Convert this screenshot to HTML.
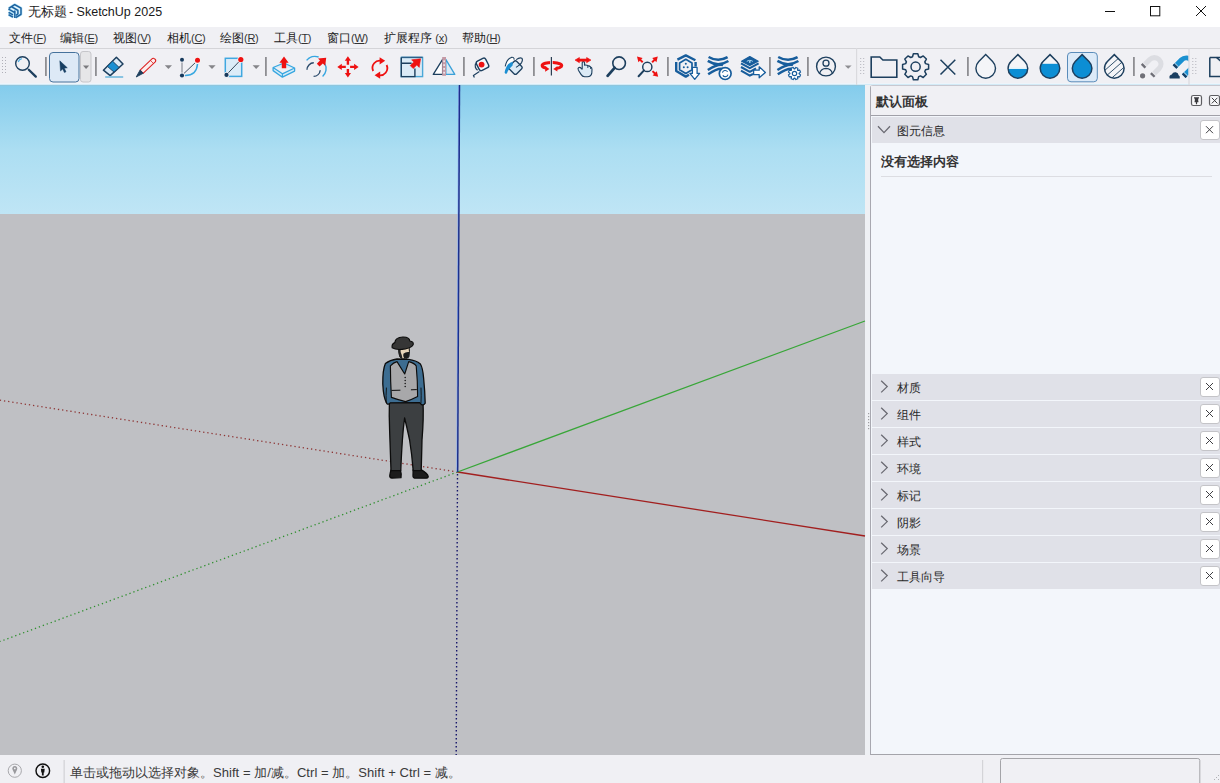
<!DOCTYPE html>
<html><head><meta charset="utf-8">
<style>
*{margin:0;padding:0;box-sizing:border-box}
html,body{width:1220px;height:783px;overflow:hidden;background:#f0f0f4;font-family:"Liberation Sans",sans-serif;color:#1a1a1a;position:relative}
.a{position:absolute}
.ov{position:absolute;left:0;top:0;z-index:10}
#title{left:0;top:0;width:1220px;height:27px;background:#ffffff}
#title .t{left:28px;top:3.5px;font-size:12.5px;color:#1a1a1a;white-space:nowrap;letter-spacing:0}
#menu{left:0;top:27px;width:1220px;height:22px;background:#f0f0f4;border-bottom:1px solid #d4d4d8}
#menu>span{position:absolute;top:2.5px;font-size:12px;white-space:nowrap;color:#1a1a1a}
#menu i{font-style:normal;font-size:11px;letter-spacing:-0.3px;color:#333}
#menu u{text-decoration:underline;text-underline-offset:1px}
#tb{left:0;top:49px;width:1220px;height:36px;background:#f0f0f4;border-bottom:1px solid #d2eaf6;box-shadow:inset 0 -1px 0 #eef4fa}
#vp{left:0;top:85px;width:865px;height:670px;background:#bfc0c4;overflow:hidden}
#sky{left:0;top:0;width:865px;height:129px;background:linear-gradient(#84ccec 0%,#acdef2 50%,#bfe5f5 100%);border-top:1px solid #8ec6de}
#gap{left:865px;top:85px;width:6px;height:670px;background:#eef0f4}
#panel{left:870px;top:85px;width:350px;height:670px;background:#f3f6fb;border-left:1px solid #a8a8b0;border-top:1px solid #c8c8d0;border-bottom:1px solid #a4a4aa;border-top-left-radius:3px}
#ph{left:0;top:0;width:349px;height:30px;background:#f0f0f4;border-bottom:1px solid #a0a0a8}
.bold{font-weight:bold}
.c{display:inline-block;white-space:nowrap}
.sec{position:absolute;left:1px;width:348px;height:26px;background:#e0e1e8}
.sec .lbl{position:absolute;left:25px;top:6px;font-size:12px;color:#2a2a2a;white-space:nowrap}
.sec .cb{position:absolute;left:328px;top:3px;width:20px;height:20px;background:#fff;border:1px solid #c4c4c8;border-radius:3px}
#status{left:0;top:755px;width:1220px;height:28px;background:#f0f0f4}
</style></head><body>
<div id="title" class="a">
  <div class="t a"><span class="c" style="width:37.5px">无标题</span> - SketchUp 2025</div>
</div>
<div id="menu" class="a">
  <span style="left:9px"><span class="c" style="width:24px">文件</span><i>(<u>F</u>)</i></span>
  <span style="left:60px"><span class="c" style="width:24px">编辑</span><i>(<u>E</u>)</i></span>
  <span style="left:113px"><span class="c" style="width:24px">视图</span><i>(<u>V</u>)</i></span>
  <span style="left:167px"><span class="c" style="width:24px">相机</span><i>(<u>C</u>)</i></span>
  <span style="left:220px"><span class="c" style="width:24px">绘图</span><i>(<u>R</u>)</i></span>
  <span style="left:274px"><span class="c" style="width:24px">工具</span><i>(<u>T</u>)</i></span>
  <span style="left:327px"><span class="c" style="width:24px">窗口</span><i>(<u>W</u>)</i></span>
  <span style="left:384px"><span class="c" style="width:48px">扩展程序</span> <i>(<u>x</u>)</i></span>
  <span style="left:462px"><span class="c" style="width:24px">帮助</span><i>(<u>H</u>)</i></span>
</div>
<div id="tb" class="a"></div>
<div id="vp" class="a">
  <div id="sky" class="a"></div>
</div>
<div id="gap" class="a"></div>
<div id="panel" class="a">
  <div id="ph" class="a"><div class="a bold" style="left:5px;top:8px;font-size:12.5px;color:#333">默认面板</div></div>
  <div class="sec" style="top:31px"><div class="lbl">图元信息</div><div class="cb" style="top:2.5px"></div></div>
  <div class="a bold" style="left:10px;top:68px;font-size:12.5px;color:#333">没有选择内容</div>
  <div class="a" style="left:10px;top:89.5px;width:331px;height:1.8px;background:#dcdde2"></div>
  <div class="sec" style="top:288px"><div class="lbl">材质</div><div class="cb"></div></div>
  <div class="sec" style="top:315px"><div class="lbl">组件</div><div class="cb"></div></div>
  <div class="sec" style="top:342px"><div class="lbl">样式</div><div class="cb"></div></div>
  <div class="sec" style="top:369px"><div class="lbl">环境</div><div class="cb"></div></div>
  <div class="sec" style="top:396px"><div class="lbl">标记</div><div class="cb"></div></div>
  <div class="sec" style="top:423px"><div class="lbl">阴影</div><div class="cb"></div></div>
  <div class="sec" style="top:450px"><div class="lbl">场景</div><div class="cb"></div></div>
  <div class="sec" style="top:477px"><div class="lbl">工具向导</div><div class="cb"></div></div>
</div>
<div id="status" class="a">
  <div class="a" style="left:70px;top:9px;font-size:13px;color:#3a3a3a;white-space:nowrap;letter-spacing:0.05px"><span class="c" style="width:143px">单击或拖动以选择对象。</span>Shift = <span class="c" style="width:13px">加</span>/<span class="c" style="width:26px">减。</span>Ctrl = <span class="c" style="width:26px">加。</span>Shift + Ctrl = <span class="c" style="width:26px">减。</span></div>
</div>
<svg class="ov" width="1220" height="783" viewBox="0 0 1220 783">
<!-- toolbar icons -->
<g id="tbicons">
<!-- grip -->
<g fill="#b0b0b8">
<rect x="2" y="57" width="1" height="1"/><rect x="5" y="57" width="1" height="1"/>
<rect x="2" y="60" width="1" height="1"/><rect x="5" y="60" width="1" height="1"/>
<rect x="2" y="63" width="1" height="1"/><rect x="5" y="63" width="1" height="1"/>
<rect x="2" y="66" width="1" height="1"/><rect x="5" y="66" width="1" height="1"/>
<rect x="2" y="69" width="1" height="1"/><rect x="5" y="69" width="1" height="1"/>
<rect x="2" y="72" width="1" height="1"/><rect x="5" y="72" width="1" height="1"/>
</g>
<!-- separators -->
<g fill="#8e8e92">
<rect x="45" y="57" width="1.8" height="19"/>
<rect x="95" y="57" width="1.8" height="19"/>
<rect x="265" y="57" width="1.8" height="19"/>
<rect x="463" y="57" width="1.8" height="19"/>
<rect x="533" y="57" width="1.8" height="19"/>
<rect x="667" y="57" width="1.8" height="19"/>
<rect x="769" y="57" width="1.8" height="19"/>
<rect x="807" y="57" width="1.8" height="19"/>
<rect x="967" y="57" width="1.8" height="19"/>
<rect x="1133" y="57" width="1.8" height="19"/>
</g>
<!-- magnifier -->
<circle cx="22.5" cy="63.5" r="6.8" fill="none" stroke="#1d3f5e" stroke-width="1.4"/>
<path d="M18.2,62 A4.6,4.6 0 0 1 21.8,58.7" fill="none" stroke="#4aaee4" stroke-width="1.2"/>
<line x1="28.8" y1="69.8" x2="35.8" y2="76.6" stroke="#1d3f5e" stroke-width="2.3" stroke-linecap="round"/>
<!-- select button -->
<rect x="49.5" y="52.5" width="29.5" height="29.5" rx="3.5" fill="#dde9f6" stroke="#46729c" stroke-width="1"/>
<path d="M59.8,60.8 L67.3,67.8 L64.3,68.2 L66,71.8 L64.4,72.6 L62.7,69 L60.5,71 Z" fill="#173e62" stroke="#173e62" stroke-width="0.5" stroke-linejoin="round"/>
<rect x="80.5" y="51.5" width="10.5" height="30.5" rx="2.5" fill="#e6e6e8" stroke="#c6c6ca" stroke-width="1"/>
<path d="M83,65.6 L89.2,65.6 L86.1,69 Z" fill="#7a7a7e"/>
<!-- eraser -->
<path d="M103.4,70.2 L116.4,57.2 L123,64.0 L110.2,75.6 Z" fill="#dbeaf7" stroke="#1d3f5e" stroke-width="1.5" stroke-linejoin="round"/>
<path d="M107.30,66.30 L112.50,61.10 L119.16,67.48 L114.04,72.12 Z" fill="#1a8fd2" stroke="#1d3f5e" stroke-width="0.9" stroke-linejoin="round"/>
<line x1="105.2" y1="77" x2="123.2" y2="77" stroke="#7dbfe0" stroke-width="1.8"/>
<!-- pencil -->
<path d="M143.1,73.3 L155.5,61.6 Q156.4,59.4 154,58.4 Q153.2,58 152.5,58.4 L140.1,70.1 Z" fill="#fbeeee" stroke="#dd2424" stroke-width="1.1" stroke-linejoin="round"/>
<path d="M150.4,60.4 L153.6,63.6" stroke="#dd2424" stroke-width="0.8"/>
<path d="M136.2,77 L140.1,70.1 L143.1,73.3 Z" fill="#1d3f5e" stroke="#1d3f5e" stroke-width="0.9" stroke-linejoin="round"/>
<path d="M164.8,65.2 L172,65.2 L168.4,68.9 Z" fill="#858589"/>
<!-- arc -->
<line x1="182" y1="61" x2="182" y2="74" stroke="#8a8e96" stroke-width="1.2"/>
<line x1="183.4" y1="74" x2="196" y2="62" stroke="#2e3e4e" stroke-width="0.9"/>
<path d="M185,75.5 Q196.6,75.6 197.5,64" fill="none" stroke="#38a8e0" stroke-width="1.5"/>
<circle cx="182" cy="59.7" r="2.9" fill="#f0f0f4"/><circle cx="182" cy="59.7" r="2" fill="#173a5c"/>
<circle cx="182" cy="75.5" r="2.9" fill="#f0f0f4"/><circle cx="182" cy="75.5" r="2.1" fill="#173a5c"/>
<circle cx="197.5" cy="60.3" r="3.3" fill="#f8f0f0"/><circle cx="197.5" cy="60.3" r="2.5" fill="#ee1111"/>
<path d="M208.4,65.2 L215.6,65.2 L212,68.9 Z" fill="#858589"/>
<!-- rectangle -->
<rect x="225.3" y="58.3" width="16.4" height="18.1" fill="#dcecf8" stroke="#40a8e0" stroke-width="1.5"/>
<line x1="227" y1="74.2" x2="240" y2="60.6" stroke="#26384a" stroke-width="0.9"/>
<circle cx="226.5" cy="74.9" r="2.9" fill="#f0f0f4"/><circle cx="226.5" cy="74.9" r="2.1" fill="#173a5c"/>
<circle cx="240.8" cy="59.5" r="3.3" fill="#f8f0f0"/><circle cx="240.8" cy="59.5" r="2.6" fill="#ee1111"/>
<path d="M252.6,65.2 L259.8,65.2 L256.2,68.9 Z" fill="#858589"/>
</g>

<g id="tb2">
<!-- push/pull -->
<path d="M273.1,67.5 L284,63 L294.6,68 L282.4,73.8 Z M273.1,67.5 L273.1,70.6 L282.4,77.2 L294.6,71.1 L294.6,68 M282.4,73.8 L282.4,77.2" fill="#d6ecf8" stroke="#36a6e0" stroke-width="1.3" stroke-linejoin="round"/>
<path d="M284,56.6 L288.6,62.8 L286.2,62.8 L286.2,68.2 L281.8,68.2 L281.8,62.8 L279.4,62.8 Z" fill="#ee1111"/>
<!-- follow me -->
<path d="M306.6,60.4 A10.6,10.6 0 0 1 318.6,57" fill="none" stroke="#36a6e0" stroke-width="1.4"/>
<path d="M324.8,63.5 A10.6,10.6 0 0 1 322.6,76.5" fill="none" stroke="#36a6e0" stroke-width="1.4"/>
<path d="M307,69.8 A6.9,6.9 0 0 1 313.8,62.8" fill="none" stroke="#2a4a6a" stroke-width="1.4"/>
<path d="M320.2,70.2 A6.9,6.9 0 0 1 313.6,76.4" fill="none" stroke="#2a4a6a" stroke-width="1.4"/>
<path d="M326.2,57.8 L325.2,65.8 L322.8,63.4 L319.6,66.6 L316.8,63.8 L320,60.6 L318,58.4 Z" fill="#ee1111"/>
<!-- move -->
<g fill="#ee1111">
<path d="M347.9,56.3 L351,60.8 L349.1,60.8 L349.1,64.8 L346.7,64.8 L346.7,60.8 L344.8,60.8 Z"/>
<path d="M347.9,77.6 L351,73.1 L349.1,73.1 L349.1,69.1 L346.7,69.1 L346.7,73.1 L344.8,73.1 Z"/>
<path d="M337.3,66.9 L341.8,63.8 L341.8,65.7 L345.8,65.7 L345.8,68.1 L341.8,68.1 L341.8,70 Z"/>
<path d="M358.6,66.9 L354.1,63.8 L354.1,65.7 L350.1,65.7 L350.1,68.1 L354.1,68.1 L354.1,70 Z"/>
</g>
<!-- rotate -->
<path d="M373.2,71 A7.3,7.3 0 0 1 381.5,60.8" fill="none" stroke="#ee1111" stroke-width="1.8"/>
<path d="M386.6,65 A7.3,7.3 0 0 1 378.3,75.2" fill="none" stroke="#ee1111" stroke-width="1.8"/>
<path d="M385.2,60.8 L379.6,57.2 L379.6,64.4 Z" fill="#ee1111"/>
<path d="M374.6,75.2 L380.2,71.6 L380.2,78.8 Z" fill="#ee1111"/>
<!-- scale -->
<rect x="401.3" y="57.4" width="21.3" height="19.2" fill="#dbeaf6" stroke="#4aa8d8" stroke-width="1.4"/>
<path d="M401.3,57.4 L422.6,57.4" stroke="#2d6088" stroke-width="1.4"/>
<path d="M401.3,57.4 L401.3,76.6 L414.9,76.6 L414.9,68.6 M401.3,63.2 L411.6,63.2" fill="none" stroke="#1d3f5e" stroke-width="1.4"/>
<path d="M420.6,58.8 L419.2,67.4 L416.8,65 L413.2,68.6 L410.2,65.6 L413.8,62 L411.6,59.8 Z" fill="#ee1111" stroke="#ee1111" stroke-width="0.6" stroke-linejoin="round"/>
<!-- flip -->
<path d="M433.3,74.4 L442.6,59.4 L442.6,74.4 Z" fill="#ffffff" stroke="#1d3f5e" stroke-width="1.3" stroke-linejoin="round"/>
<path d="M445.8,59.4 L454.8,74.4 L445.8,74.4 Z" fill="#dbeaf6" stroke="#3aa0d8" stroke-width="1.3" stroke-linejoin="round"/>
<rect x="442.2" y="57" width="3.8" height="18.8" fill="#c49aa6"/>
<g fill="#f6f6fa"><rect x="443.4" y="60.4" width="1.4" height="1.8"/><rect x="443.4" y="64.2" width="1.4" height="1.8"/><rect x="443.4" y="68" width="1.4" height="1.8"/><rect x="443.4" y="71.8" width="1.4" height="1.8"/></g>
<!-- tape measure -->
<rect x="-5.2" y="-5.2" width="10.4" height="10.4" rx="2.2" transform="translate(482.5 64.4) rotate(-27)" fill="#f4f6fa" stroke="#1d3f5e" stroke-width="1.4"/>
<path d="M475.6,63.4 Q474.2,67.6 477.6,70.2" fill="none" stroke="#1d3f5e" stroke-width="1.2"/>
<circle cx="481.6" cy="64.6" r="2.9" fill="#ee1111"/>
<path d="M479.4,71.6 L473.4,75.4 L474.4,77.4" fill="none" stroke="#1d3f5e" stroke-width="1.2" stroke-linejoin="round"/>
<!-- paint bucket -->
<rect x="-5.3" y="-5.3" width="10.6" height="10.6" rx="2" transform="translate(515.4 67.6) rotate(45)" fill="#dceaf6" stroke="#1d3f5e" stroke-width="1.3"/>
<path d="M516.2,59.6 Q519.6,57.2 521.8,58.2 Q523.2,59.6 521.6,62.6 Q520.4,64.4 518.6,65.6 L516,67.4" fill="none" stroke="#1d3f5e" stroke-width="1.1"/>
<path d="M505.2,66.4 Q506.6,59 511.4,57.4 Q514,56.8 514.2,59.6" fill="#ffffff" stroke="#1d3f5e" stroke-width="1.1"/>
<path d="M512.8,61.8 Q508.8,62.6 506.6,66.4 Q504.8,70 504.6,72.6 Q505.4,74.8 507,73.2 Q508.4,69 512.6,65.4 Z" fill="#1c8fd2"/>
</g>

<g id="tb3">
<path d="M546,68.13 A9.8,3.2 0 1 1 556,68.5" fill="none" stroke="#ee1111" stroke-width="3"/>
<path d="M549.4,68.9 L545.2,66 L545.2,71.8 Z" fill="#ee1111"/>
<path d="M553.2,68.9 L557.4,66.2 L557.4,71.6 Z" fill="#ee1111"/>
<line x1="551.4" y1="57" x2="551.4" y2="75.4" stroke="#f0f0f4" stroke-width="2.6"/>
<line x1="551.4" y1="57" x2="551.4" y2="75.4" stroke="#2a3e52" stroke-width="1.2"/>
<path d="M582.2,69.5 L582.2,62.8 Q582.2,61.6 583.4,61.6 Q584.6,61.6 584.6,62.8 L584.6,65.2 Q586.4,64.8 587.8,65.6 Q589.8,65.8 590.6,67 Q592,67.6 592,69.2 L591.8,73.2 Q591.2,76.6 587.4,76.8 L584.6,76.8 Q582.4,76.6 581,74.4 L578.4,70.2 Q577.4,68.4 578.8,67.6 Q580.2,67 581.2,68.4 L582.2,69.5" fill="#dbeaf6" stroke="#1d3f5e" stroke-width="1.1" stroke-linejoin="round"/>
<path d="M587.8,65.6 L587.8,68 M590.6,67 L590.6,69" stroke="#1d3f5e" stroke-width="0.9"/>
<path d="M575,60.1 L579.4,57.5 L579.4,59 L586.6,59 L586.6,57.5 L591,60.1 L586.6,62.7 L586.6,61.2 L579.4,61.2 L579.4,62.7 Z" fill="#ee1111" stroke="#ee1111" stroke-width="0.6" stroke-linejoin="round"/>
<circle cx="619.1" cy="63.2" r="6.3" fill="none" stroke="#1d3f5e" stroke-width="1.6"/>
<line x1="614.6" y1="67.8" x2="607.6" y2="75.8" stroke="#1d3f5e" stroke-width="2.8" stroke-linecap="round"/>
<circle cx="647.3" cy="66.9" r="4.6" fill="none" stroke="#1d3f5e" stroke-width="1.45"/>
<line x1="644" y1="70.4" x2="638.6" y2="76.2" stroke="#1d3f5e" stroke-width="2" stroke-linecap="round"/>
<g fill="#ee1111"><path d="M637,56.6 L642.6,58 L641.2,59.4 L643.4,61.6 L642,63 L639.8,60.8 L638.4,62.2 Z"/><path d="M657.8,56.6 L656.4,62.2 L655,60.8 L652.8,63 L651.4,61.6 L653.6,59.4 L652.2,58 Z"/><path d="M658.2,76.8 L652.6,75.4 L654,74 L651.8,71.8 L653.2,70.4 L655.4,72.6 L656.8,71.2 Z"/></g>
<g fill="none" stroke="#175d9c" stroke-linejoin="round">
<path d="M677.4,59.6 L685.8,55.4 L695.4,60.2" stroke-width="2.4"/>
<path d="M676.2,62 L676.2,71 L685.8,76.6 L689,74.8" stroke-width="2.4"/>
<path d="M695.6,62 L695.6,66.6" stroke-width="2.4"/>
<path d="M685.8,59.3 L692,62.9 L692,69.8 L685.8,73.4 L679.6,69.8 L679.6,62.9 Z" stroke-width="1.7"/>
</g>
<g fill="#175d9c"><circle cx="685.8" cy="63.8" r="1"/><circle cx="683.8" cy="67.2" r="1"/><circle cx="687.6" cy="67.2" r="1"/></g>
<path d="M692.4,67.4 L697.1,67.4 L697.1,73.4 L699.6,73.4 L694.75,79.3 L689.9,73.4 L692.4,73.4 Z" fill="#ffffff" stroke="#175d9c" stroke-width="1.3" stroke-linejoin="round"/>
<path d="M708.5999999999999,57 Q718.0999999999999,62.6 727.6,57.2" fill="none" stroke="#175d9c" stroke-width="2.5"/><path d="M707.8,60.9 Q718.0999999999999,67.4 728.4,61" fill="none" stroke="#175d9c" stroke-width="2.5"/><path d="M707.8,70 Q718.0999999999999,63.6 723,65" fill="none" stroke="#175d9c" stroke-width="2.5"/><path d="M708.1999999999999,74.2 Q718.0999999999999,67.6 723,69" fill="none" stroke="#175d9c" stroke-width="2.5"/>
<circle cx="725.2" cy="73.6" r="5.9" fill="#ffffff" stroke="#175d9c" stroke-width="1.7"/>
<path d="M722.4,72.6 A2.9,2.9 0 0 1 727.6,71.8 M728,74.6 A2.9,2.9 0 0 1 722.8,75.4" fill="none" stroke="#175d9c" stroke-width="1.1"/>
<path d="M741.6,61.2 L749.8,56.6 L758.2,61.2 L749.8,65.4 Z" fill="#175d9c" stroke="#175d9c" stroke-width="1.2" stroke-linejoin="round"/>
<path d="M746.8,61.4 A4,3 0 0 1 752.8,61.4" fill="none" stroke="#bfe6fa" stroke-width="0.9"/><circle cx="749.8" cy="61.9" r="0.9" fill="#bfe6fa"/>
<path d="M741,63.4 L749.8,68.2 L758.6,63.4 M741,67 L749.8,71.8 L756,68.4 M741,70.6 L749.8,75.6 L753,74" fill="none" stroke="#175d9c" stroke-width="2.1" stroke-linejoin="round"/>
<path d="M753.6,70.2 L759.2,70.2 L759.2,66.8 L765.4,72.4 L759.2,77.8 L759.2,74.6 L753.6,74.6 Z" fill="#ffffff" stroke="#175d9c" stroke-width="1.3" stroke-linejoin="round"/>
<path d="M778.1999999999999,57 Q787.9,62.6 797.6,57.2" fill="none" stroke="#175d9c" stroke-width="2.5"/><path d="M777.4,60.9 Q787.9,67.4 798.4,61" fill="none" stroke="#175d9c" stroke-width="2.5"/><path d="M777.4,70 Q787.9,63.6 793,65" fill="none" stroke="#175d9c" stroke-width="2.5"/><path d="M777.8,74.2 Q787.9,67.6 793,69" fill="none" stroke="#175d9c" stroke-width="2.5"/>
<path d="M799.09,73.79 L800.55,74.87 L799.74,76.81 L797.95,76.54 L797.54,76.95 L797.81,78.74 L795.87,79.55 L794.79,78.09 L794.21,78.09 L793.13,79.55 L791.19,78.74 L791.46,76.95 L791.05,76.54 L789.26,76.81 L788.45,74.87 L789.91,73.79 L789.91,73.21 L788.45,72.13 L789.26,70.19 L791.05,70.46 L791.46,70.05 L791.19,68.26 L793.13,67.45 L794.21,68.91 L794.79,68.91 L795.87,67.45 L797.81,68.26 L797.54,70.05 L797.95,70.46 L799.74,70.19 L800.55,72.13 L799.09,73.21 Z" fill="#ffffff" stroke="#175d9c" stroke-width="1.2" stroke-linejoin="round"/>
<circle cx="794.5" cy="73.5" r="2.2" fill="#ffffff" stroke="#175d9c" stroke-width="1.2"/>
<circle cx="826" cy="66.5" r="9.4" fill="none" stroke="#1d3f5e" stroke-width="1.4"/>
<circle cx="826" cy="63.2" r="3" fill="none" stroke="#1d3f5e" stroke-width="1.3"/>
<path d="M819.6,73.4 Q821,68.6 826,68.4 Q831,68.6 832.4,73.4" fill="none" stroke="#1d3f5e" stroke-width="1.3"/>
<path d="M844.8,65.4 L851.6,65.4 L848.2,68.8 Z" fill="#8e8e92"/>
</g>
<g id="tb4">
<path d="M871.2,57 L879.8,57 L882.9,60 L896.8,60 L896.8,77.2 L871.2,77.2 Z" fill="none" stroke="#1d3f5e" stroke-width="1.6" stroke-linejoin="miter"/>
<path d="M925.54,63.63 L928.61,64.47 L928.61,68.93 L925.54,69.77 L924.80,71.55 L926.38,74.32 L923.22,77.48 L920.45,75.90 L918.67,76.64 L917.83,79.71 L913.37,79.71 L912.53,76.64 L910.75,75.90 L907.98,77.48 L904.82,74.32 L906.40,71.55 L905.66,69.77 L902.59,68.93 L902.59,64.47 L905.66,63.63 L906.40,61.85 L904.82,59.08 L907.98,55.92 L910.75,57.50 L912.53,56.76 L913.37,53.69 L917.83,53.69 L918.67,56.76 L920.45,57.50 L923.22,55.92 L926.38,59.08 L924.80,61.85 Z" fill="none" stroke="#1d3f5e" stroke-width="1.5" stroke-linejoin="round"/>
<circle cx="915.6" cy="66.7" r="4.6" fill="none" stroke="#1d3f5e" stroke-width="1.5"/>
<path d="M940.5,59.7 L955.3,74.5 M955.3,59.7 L940.5,74.5" stroke="#1d3f5e" stroke-width="1.5"/>
<rect x="1067.5" y="52.5" width="29.8" height="29.3" rx="3.5" fill="#dceaf8" stroke="#5a8cba" stroke-width="1"/>
<defs>
<clipPath id="dc0"><path d="M985.7,54.6 L992.60,61.44 A9.8,9.8 0 1 1 978.80,61.44 Z"/></clipPath>
<clipPath id="dc1"><path d="M1017.9,54.6 L1024.80,61.44 A9.8,9.8 0 1 1 1011.00,61.44 Z"/></clipPath>
<clipPath id="dc2"><path d="M1050.0,54.6 L1056.90,61.44 A9.8,9.8 0 1 1 1043.10,61.44 Z"/></clipPath>
<clipPath id="dc3"><path d="M1082.1,54.6 L1089.00,61.44 A9.8,9.8 0 1 1 1075.20,61.44 Z"/></clipPath>
<clipPath id="dc4"><path d="M1114.3,54.6 L1121.20,61.44 A9.8,9.8 0 1 1 1107.40,61.44 Z"/></clipPath>
</defs>
<path d="M985.7,54.6 L992.60,61.44 A9.8,9.8 0 1 1 978.80,61.44 Z" fill="#f4f5f8" stroke="#1d3f5e" stroke-width="1.4"/>
<path d="M1017.9,54.6 L1024.80,61.44 A9.8,9.8 0 1 1 1011.00,61.44 Z" fill="#f4f5f8"/>
<rect x="1005" y="69" width="26" height="12" fill="#0c8ed4" clip-path="url(#dc1)"/>
<rect x="1005" y="67.6" width="26" height="1.4" fill="#dff3fb" clip-path="url(#dc1)"/>
<path d="M1017.9,54.6 L1024.80,61.44 A9.8,9.8 0 1 1 1011.00,61.44 Z" fill="none" stroke="#1d3f5e" stroke-width="1.5"/>
<path d="M1050.0,54.6 L1056.90,61.44 A9.8,9.8 0 1 1 1043.10,61.44 Z" fill="#f4f5f8"/>
<rect x="1037" y="63.8" width="26" height="17" fill="#0c8ed4" clip-path="url(#dc2)"/>
<path d="M1050.0,54.6 L1056.90,61.44 A9.8,9.8 0 1 1 1043.10,61.44 Z" fill="none" stroke="#1d3f5e" stroke-width="1.5"/>
<path d="M1082.1,54.6 L1089.00,61.44 A9.8,9.8 0 1 1 1075.20,61.44 Z" fill="#0c8ed4" stroke="#1d3f5e" stroke-width="1.5"/>
<path d="M1114.3,54.6 L1121.20,61.44 A9.8,9.8 0 1 1 1107.40,61.44 Z" fill="#f4f5f8"/>
<path d="M1096,78.1 L1126,51.7 M1096,85.0 L1126,58.6 M1096,91.9 L1126,65.5" stroke="#1d3f5e" stroke-width="0.9" clip-path="url(#dc4)"/>
<path d="M1114.3,54.6 L1121.20,61.44 A9.8,9.8 0 1 1 1107.40,61.44 Z" fill="none" stroke="#1d3f5e" stroke-width="1.5"/>
<path d="M1142.73,66.57 L1149.80,59.50 A6.5,6.5 0 0 1 1159.00,68.70 L1151.93,75.77" fill="none" stroke="#dcdde2" stroke-width="5.2"/><path d="M1142.73,66.57 L1144.43,64.87" stroke="#6e6e76" stroke-width="5.2"/><path d="M1144.43,64.87 L1145.13,64.17" stroke="#f0f0f4" stroke-width="5.2" opacity="0.6"/><path d="M1151.93,75.77 L1153.63,74.07" stroke="#6e6e76" stroke-width="5.2"/><path d="M1153.63,74.07 L1154.33,73.37" stroke="#f0f0f4" stroke-width="5.2" opacity="0.6"/>
<circle cx="1142.6" cy="75.8" r="3.6" fill="#f4f4f6"/><circle cx="1142.6" cy="75.8" r="2.6" fill="#707078"/>
<clipPath id="mclip"><rect x="1160" y="50" width="28.6" height="35"/></clipPath>
<g clip-path="url(#mclip)"><path d="M1174.53,66.97 L1181.60,59.90 A6.5,6.5 0 0 1 1190.80,69.10 L1183.73,76.17" fill="none" stroke="#1a90d0" stroke-width="5.2"/><path d="M1174.53,66.97 L1176.23,65.27" stroke="#1b3f62" stroke-width="5.2"/><path d="M1176.23,65.27 L1176.93,64.57" stroke="#f0f0f4" stroke-width="5.2" opacity="0.6"/><path d="M1183.73,76.17 L1185.43,74.47" stroke="#1b3f62" stroke-width="5.2"/><path d="M1185.43,74.47 L1186.13,73.77" stroke="#f0f0f4" stroke-width="5.2" opacity="0.6"/></g>
<path d="M1169.6,78.4 Q1168.8,75.2 1171.8,74.6 Q1172.8,71.8 1175.8,72.2 Q1178.4,72.6 1178.6,75.2 Q1180.2,75.8 1179.8,78.4 Z" fill="#1b3f62"/>
<rect x="856" y="48" width="1.2" height="37" fill="#dadade"/>
<rect x="1188.4" y="48" width="1.2" height="37" fill="#dadade"/>
<rect x="860.2" y="58" width="1" height="1" fill="#b4b4bc"/>
<rect x="860.2" y="61" width="1" height="1" fill="#b4b4bc"/>
<rect x="860.2" y="64" width="1" height="1" fill="#b4b4bc"/>
<rect x="860.2" y="67" width="1" height="1" fill="#b4b4bc"/>
<rect x="860.2" y="70" width="1" height="1" fill="#b4b4bc"/>
<rect x="860.2" y="73" width="1" height="1" fill="#b4b4bc"/>
<rect x="863.2" y="58" width="1" height="1" fill="#b4b4bc"/>
<rect x="863.2" y="61" width="1" height="1" fill="#b4b4bc"/>
<rect x="863.2" y="64" width="1" height="1" fill="#b4b4bc"/>
<rect x="863.2" y="67" width="1" height="1" fill="#b4b4bc"/>
<rect x="863.2" y="70" width="1" height="1" fill="#b4b4bc"/>
<rect x="863.2" y="73" width="1" height="1" fill="#b4b4bc"/>
<rect x="1192.3" y="58" width="1" height="1" fill="#b4b4bc"/>
<rect x="1192.3" y="61" width="1" height="1" fill="#b4b4bc"/>
<rect x="1192.3" y="64" width="1" height="1" fill="#b4b4bc"/>
<rect x="1192.3" y="67" width="1" height="1" fill="#b4b4bc"/>
<rect x="1192.3" y="70" width="1" height="1" fill="#b4b4bc"/>
<rect x="1192.3" y="73" width="1" height="1" fill="#b4b4bc"/>
<rect x="1195.3" y="58" width="1" height="1" fill="#b4b4bc"/>
<rect x="1195.3" y="61" width="1" height="1" fill="#b4b4bc"/>
<rect x="1195.3" y="64" width="1" height="1" fill="#b4b4bc"/>
<rect x="1195.3" y="67" width="1" height="1" fill="#b4b4bc"/>
<rect x="1195.3" y="70" width="1" height="1" fill="#b4b4bc"/>
<rect x="1195.3" y="73" width="1" height="1" fill="#b4b4bc"/>
<path d="M1209.8,57.4 L1221,57.4 M1209.8,57.4 L1209.8,76.6 L1221,76.6" fill="none" stroke="#1d3f5e" stroke-width="1.5"/>
<path d="M1216.5,57.4 L1221,61.5" fill="none" stroke="#1d3f5e" stroke-width="1.5"/>
</g>
<g id="viewport">
<line x1="457.5" y1="472" x2="0" y2="400.2" stroke="#8e3636" stroke-width="1.3" stroke-dasharray="1.3 2.9"/>
<line x1="457.5" y1="472" x2="0" y2="641.5" stroke="#2f8f2f" stroke-width="1.3" stroke-dasharray="1.3 2.9"/>
<line x1="457.5" y1="474" x2="456.2" y2="755" stroke="#14146a" stroke-width="1.4" stroke-dasharray="1.4 2.6"/>
<line x1="457.5" y1="472" x2="865" y2="536" stroke="#a21f1f" stroke-width="1.3"/>
<line x1="457.5" y1="472" x2="865" y2="321" stroke="#38a638" stroke-width="1.3"/>
<line x1="458.7" y1="86" x2="456.9" y2="472" stroke="#8fb0ee" stroke-width="1.2"/>
<line x1="459.5" y1="85" x2="457.7" y2="472" stroke="#1c2f8c" stroke-width="1.5"/>
</g>
<g id="person" stroke="#0c0c0c" stroke-width="1.3" stroke-linejoin="round" stroke-linecap="round">
<!-- shoes -->
<path d="M391,470 L400.4,470 Q401.6,474 401,477.6 L392,478 Q389.4,477.8 389.8,475.4 Q390.2,472.6 391,470 Z" fill="#1c1c1c"/>
<path d="M413.2,469.6 L421,469.6 Q427.6,473.4 428.2,476.4 Q428.2,478.2 425.6,478.2 L414.6,478 Q412.8,477.6 413,475 Z" fill="#1c1c1c"/>
<!-- pants -->
<path d="M389.4,402 L423,402 Q423.8,418 422,440 Q421.6,458 421.2,470.6 L413.2,470.6 Q412,455 409.6,440 Q406.6,426 404.6,418 Q403.2,428 402.4,440 Q401.2,458 400.8,470.6 L391,470.6 Q390.2,450 389.6,430 Q389,415 389.4,402 Z" fill="#3c3f41"/>
<!-- body: shirt (arms + collar) -->
<path d="M385.4,363.6 Q390,360 397,359 L408.6,359.4 Q416,360.4 420.4,364 Q422.8,368 423.6,378 Q425,392 425.2,403.2 Q423.4,406 421.2,404.2 L419.6,402.6 L390.2,402.8 Q388.6,405 386.8,403.4 Q383.4,398 382.8,384 Q382.6,370 385.4,363.6 Z" fill="#3d6d91"/>
<!-- vest -->
<path d="M390.4,365.8 Q393.4,362.6 397,361.6 L404.7,374 L408.7,361.6 Q414.2,363 416.2,365.8 Q417.6,380 417.6,396.6 Q412,399.6 405.6,401.6 Q398,399.8 391.4,397.4 Q390.4,380 390.4,365.8 Z" fill="#a8a8aa" stroke-width="1.15"/>
<path d="M391.9,390.4 L400,390.2 M411.3,389.8 L416.4,389.6" stroke-width="1"/>
<path d="M386.2,402.6 Q385.8,396 386.4,388" fill="none" stroke-width="0.9"/>
<path d="M421,402.8 Q421.4,396 421,388" fill="none" stroke-width="0.9"/>
<g fill="#151515" stroke="none"><circle cx="405.2" cy="377.4" r="0.75"/><circle cx="405.2" cy="380.4" r="0.75"/><circle cx="405.2" cy="383.4" r="0.75"/><circle cx="405.2" cy="386.4" r="0.75"/></g>
<!-- face -->
<path d="M398.6,346.8 L409,345.8 Q410,352 408.8,357 Q406.4,359.4 401.6,358.8 Q398.8,356.8 398.6,346.8 Z" fill="#e8d5b9" stroke-width="1"/>
<path d="M398.4,347.6 Q397.8,353 399.2,356.4 Q400.8,358.6 402.6,358.8 Q402,355 400.6,352 Q400.4,349 401,347 Z" fill="#222" stroke="none"/>
<path d="M403.4,353.8 Q405.6,351.6 409,352 Q409.6,355.4 408.6,357.4 Q406.6,358.8 404,358 Q402.8,356 403.4,353.8 Z" fill="#1c1c1c" stroke="none"/>
<!-- hat -->
<path d="M392.2,347.8 Q391.4,344.2 394.8,342.6 Q395.4,337.2 402.8,337 Q409.4,336.8 409.8,341 Q413.8,341.6 413.2,344.6 Q412,347.6 405.4,348.8 Q396.6,350.6 392.2,347.8 Z" fill="#363636" stroke-width="1.2"/>
</g>

<g id="misc">
<!-- title logo -->
<g fill="none" stroke="#a8dcf4" stroke-width="2.6" stroke-linejoin="round"><path d="M8.8,8.4 L14.7,4.6 L21,8.1 L21,14.3 L15.6,17.6"/>
<path d="M11.8,6.9 L17.9,10.4 L17.9,14 L15.8,15.3"/>
<path d="M14.8,10.6 L14.8,18"/>
<path d="M8.4,9 L14.4,12.4 M8.6,12.3 L13,14.8 M8.6,14.6 L13,17.2"/></g>
<g fill="none" stroke="#1b5f9c" stroke-width="1.4" stroke-linejoin="round"><path d="M8.8,8.4 L14.7,4.6 L21,8.1 L21,14.3 L15.6,17.6"/>
<path d="M11.8,6.9 L17.9,10.4 L17.9,14 L15.8,15.3"/>
<path d="M14.8,10.6 L14.8,18"/>
<path d="M8.4,9 L14.4,12.4 M8.6,12.3 L13,14.8 M8.6,14.6 L13,17.2"/></g>
<!-- window controls -->
<line x1="1105" y1="11.5" x2="1115" y2="11.5" stroke="#111" stroke-width="1"/>
<rect x="1150.5" y="6.5" width="9.3" height="9.3" fill="none" stroke="#111" stroke-width="1"/>
<path d="M1196,6 L1206,16 M1206,6 L1196,16" stroke="#111" stroke-width="1"/>
<!-- status icons -->
<circle cx="14.8" cy="770.7" r="6.6" fill="none" stroke="#a8a8ac" stroke-width="1"/>
<path d="M14.8,774.6 L12.6,769.8 A2.5,2.5 0 1 1 17,769.8 Z" fill="#9a9a9e"/>
<circle cx="14.8" cy="768.4" r="0.9" fill="#f0f0f4"/>
<circle cx="42.8" cy="770.7" r="6.8" fill="none" stroke="#111" stroke-width="1.45"/>
<circle cx="42.8" cy="766.8" r="1.3" fill="#111"/>
<path d="M40.9,768.8 L44.7,768.8 L44.3,772.4 L43.7,772.4 L43.7,775.4 L41.9,775.4 L41.9,772.4 L41.3,772.4 Z" fill="#111"/>
<rect x="63.5" y="760" width="1.3" height="23" fill="#d4d4d8"/>
<rect x="982" y="760" width="1.2" height="23" fill="#d4d4d8"/>
<path d="M1000.5,783 L1000.5,760.5 Q1000.5,758.5 1002.5,758.5 L1197.8,758.5 Q1199.8,758.5 1199.8,760.5 L1199.8,783" fill="none" stroke="#a4a4a8" stroke-width="1"/>
<g fill="#b0b0b4"><rect x="1216" y="777" width="1" height="1"/><rect x="1218" y="775" width="1" height="1"/><rect x="1218" y="779" width="1" height="1"/><rect x="1214" y="779" width="1" height="1"/></g>
<!-- panel header icons -->
<rect x="1191.5" y="95.5" width="10" height="10" rx="1.8" fill="#f8f8fa" stroke="#5e5e62" stroke-width="1.2"/>
<path d="M1194,97.8 L1199,97.8 M1194.6,101.6 L1198.4,101.6 M1195.4,98 L1195.4,101.6 M1197.6,98 L1197.6,101.6 M1196.5,101.6 L1196.5,104.2" stroke="#3a3a3e" stroke-width="1.2"/>
<rect x="1195.6" y="98" width="1.8" height="3.6" fill="#3a3a3e"/>
<rect x="1209.5" y="95.5" width="10" height="10" rx="1.8" fill="#f8f8fa" stroke="#5e5e62" stroke-width="1.2"/>
<path d="M1211.8,97.8 L1217.4,103.4 M1217.4,97.8 L1211.8,103.4" stroke="#3a3a3e" stroke-width="1"/>
<!-- chevrons -->
<path d="M878,126.2 L884,132.6 L890,126.2" fill="none" stroke="#6a6a72" stroke-width="1.3"/>
<g fill="none" stroke="#6a6a72" stroke-width="1.3">
<path d="M881.2,380.8 L887.2,386.6 L881.2,392.4"/>
<path d="M881.2,407.8 L887.2,413.6 L881.2,419.4"/>
<path d="M881.2,434.8 L887.2,440.6 L881.2,446.4"/>
<path d="M881.2,461.8 L887.2,467.6 L881.2,473.4"/>
<path d="M881.2,488.8 L887.2,494.6 L881.2,500.4"/>
<path d="M881.2,515.8 L887.2,521.6 L881.2,527.4"/>
<path d="M881.2,542.8 L887.2,548.6 L881.2,554.4"/>
<path d="M881.2,569.8 L887.2,575.6 L881.2,581.4"/>
</g>
<!-- close X in section buttons -->
<g stroke="#404044" stroke-width="1">
<path d="M1206,126.2 L1213,133.2 M1213,126.2 L1206,133.2"/>
<path d="M1206,383 L1213,390 M1213,383 L1206,390"/>
<path d="M1206,410 L1213,417 M1213,410 L1206,417"/>
<path d="M1206,437 L1213,444 M1213,437 L1206,444"/>
<path d="M1206,464 L1213,471 M1213,464 L1206,471"/>
<path d="M1206,491 L1213,498 M1213,491 L1206,498"/>
<path d="M1206,518 L1213,525 M1213,518 L1206,525"/>
<path d="M1206,545 L1213,552 M1213,545 L1206,552"/>
<path d="M1206,572 L1213,579 M1213,572 L1206,579"/>
</g>
<!-- dotted grip between viewport and panel -->
<g fill="#9e9ea2"><rect x="868" y="413" width="1.2" height="1.2"/><rect x="868" y="416" width="1.2" height="1.2"/><rect x="868" y="419" width="1.2" height="1.2"/><rect x="868" y="422" width="1.2" height="1.2"/><rect x="868" y="425" width="1.2" height="1.2"/><rect x="868" y="428" width="1.2" height="1.2"/></g>
</g>

</svg>
</body></html>
